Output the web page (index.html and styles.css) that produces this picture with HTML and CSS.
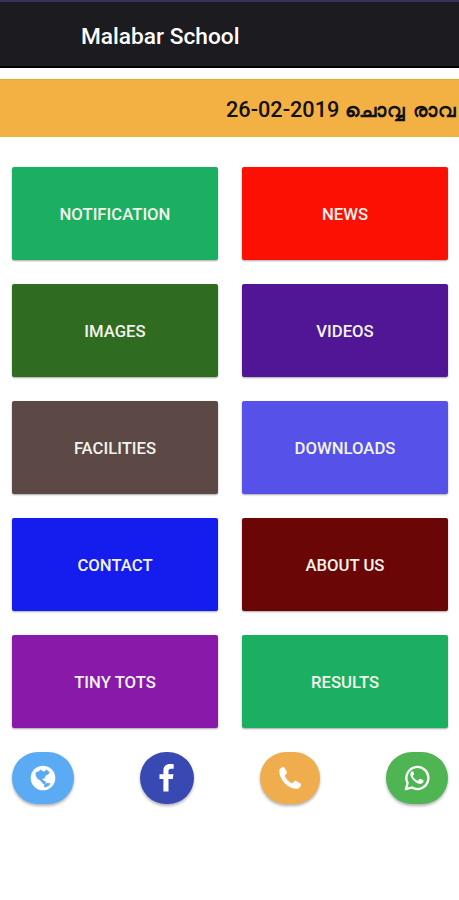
FILE: index.html
```html
<!DOCTYPE html>
<html lang="en">
<head>
  <meta charset="UTF-8">
  <meta name="viewport" content="width=device-width, initial-scale=1.0">
  <title>Malabar School</title>
  <link rel="stylesheet" href="styles.css">
</head>
<body>
  <header class="toolbar">
    <h1>Malabar School</h1>
  </header>

  <!-- News ticker -->
  <div class="ticker">
    <span class="ticker-text">26-02-2019 <span class="ticker-ml" lang="ml">ചൊവ്വ രാവ</span></span>
  </div>

  <!-- Main menu -->
  <main class="menu">
    <a class="tile notification">NOTIFICATION</a>
    <a class="tile news">NEWS</a>
    <a class="tile images">IMAGES</a>
    <a class="tile videos">VIDEOS</a>
    <a class="tile facilities">FACILITIES</a>
    <a class="tile downloads">DOWNLOADS</a>
    <a class="tile contact">CONTACT</a>
    <a class="tile about">ABOUT US</a>
    <a class="tile tots">TINY TOTS</a>
    <a class="tile results">RESULTS</a>
  </main>

  <!-- Social buttons -->
  <footer class="social">
    <a class="round web" aria-label="Website">
      <svg width="26" height="26" viewBox="0 0 26 26">
        <circle cx="13" cy="13" r="12.3" fill="#fff"/>
        <path fill="#5aabf3" d="M5.600 7.400 8.800 6.200l1.900-1.700 2.300 1.700 1.700.2 1.600-1.900 3.400 2.800-1.600 2.300-2.200.8-1.400 2.800-2.300.8 1 1.200 2.600 1.400-.2 2.800-2.600-.6-2.800-3.200-3-2.200-1.500-3z"/>
        <path fill="#5aabf3" d="m14.200 19.400 2.800-1.400 3.400.2-1.400 2.600-3.600 1.800-1.600-1z"/>
      </svg>
    </a>
    <a class="round facebook" aria-label="Facebook">
      <svg width="16" height="28" viewBox="0 0 16 28">
        <path fill="#fff" d="M14.700.3v4.500H12c-2 0-2.500 1-2.500 2.500v3h5l-.7 4.700H9.500V27.500H4.400V15H.5v-4.700h3.900V6.700C4.400 2.500 7 .1 10.900.1c1.800 0 3.300.1 3.800.2z"/>
      </svg>
    </a>
    <a class="round phone" aria-label="Call">
      <svg width="24" height="24" viewBox="0 0 24 24">
        <path fill="#fff" d="M1.300 5.200C1.200 3.400 2.600 1.900 4.100 1.200c.9-.4 1.700-.5 2.100.2l2.600 4.400c.4.700.2 1.300-.4 1.900L7 9.200c-.4.400-.4.800-.1 1.400 1.500 2.800 3.600 5 6.400 6.500.6.300 1 .3 1.400-.1l1.700-1.700c.5-.5 1.100-.6 1.700-.2l4.300 2.400c.7.4.7 1 .4 1.900-.6 2-2.300 3.400-4.300 3.400C10 22.700 1.500 13.500 1.300 5.200z"/>
      </svg>
    </a>
    <a class="round whatsapp" aria-label="WhatsApp">
      <svg width="26" height="26" viewBox="0 0 26 26">
        <path fill="none" stroke="#fff" stroke-width="2.300" stroke-linejoin="round" d="M1.900 24.100 3.600 18A11 11 0 1 1 7.900 22.500z"/>
        <path fill="#fff" d="M9.400 6.800c-.4-.8-1.500-.7-2.100 0-1 1.100-1.200 2.600-.6 4.100 1.300 3.500 4.700 6.800 8.300 7.800 1.800.5 3.900-.3 4.400-2 .3-1 .2-1.300-.4-1.600l-2.500-1.200c-.6-.3-.9-.1-1.300.4l-.9 1.100c-.3.300-.6.300-1 .1-2-.9-3.400-2.200-4.400-3.900-.2-.4-.1-.7.100-1l.9-1.100c.2-.3.300-.6.100-1z"/>
      </svg>
    </a>
  </footer>
</body>
</html>
```

FILE: styles.css
```css
/* General Styles */
* {
  box-sizing: border-box;
}

body {
  font-family: Roboto, sans-serif;
  margin: 0;
  background-color: #fff;
  overflow-x: hidden;
}

/* Toolbar */
.toolbar {
  display: flex;
  align-items: center;
  height: 68px;
  padding: 5px 0 0 81px;
  background-color: #1c1b20;
  border-top: 2px solid #37345a;
  border-bottom: 2px solid #000;
}

h1 {
  margin: 0;
  font-size: 22.7px;
  font-weight: 500;
  color: #fff;
}

/* Ticker */
.ticker {
  display: flex;
  align-items: center;
  height: 58px;
  margin-top: 11px;
  padding: 2px 0 0 226px;
  background-color: #f4b143;
  border-top: 1px solid #e9aa2c;
  overflow: hidden;
}

.ticker-text {
  font-size: 21.7px;
  font-weight: 500;
  line-height: 30px;
  color: #111;
  white-space: nowrap;
}

.ticker-ml {
  font-size: 20px;
  font-weight: 700;
  letter-spacing: 1.4px;
}

/* Menu */
.menu {
  display: grid;
  grid-template-columns: 1fr 1fr;
  grid-auto-rows: 93px;
  gap: 24px;
  padding: 30px 11px 0 12px;
}

.tile {
  display: flex;
  align-items: center;
  justify-content: center;
  padding-top: 2px;
  border-radius: 2px;
  box-shadow: 0 1px 2px rgba(0, 0, 0, 0.35);
  font-size: 16.7px;
  font-weight: 500;
  color: #f3f3ec;
}

.notification,
.results {
  background-color: #1bb061;
}

.news {
  background-color: #fc1003;
}

.images {
  background-color: #2f6b20;
}

.videos {
  background-color: #501696;
}

.facilities {
  background-color: #5c4844;
}

.downloads {
  background-color: #5651e9;
}

.contact {
  background-color: #151cee;
}

.about {
  background-color: #6a0605;
}

.tots {
  background-color: #8819a9;
}

/* Social buttons */
.social {
  display: flex;
  justify-content: space-between;
  padding: 24px 11px 4px 12px;
}

.round {
  display: flex;
  align-items: center;
  justify-content: center;
  width: 62px;
  height: 52px;
  border-radius: 26px;
  box-shadow: 0 2px 3px rgba(0, 0, 0, 0.3);
}

.web {
  background-color: #5aabf3;
}

.facebook {
  width: 54px;
  background-color: #3949b3;
}

.phone {
  width: 60px;
  background-color: #f0ad4e;
}

.whatsapp {
  background-color: #4fb553;
}
```
